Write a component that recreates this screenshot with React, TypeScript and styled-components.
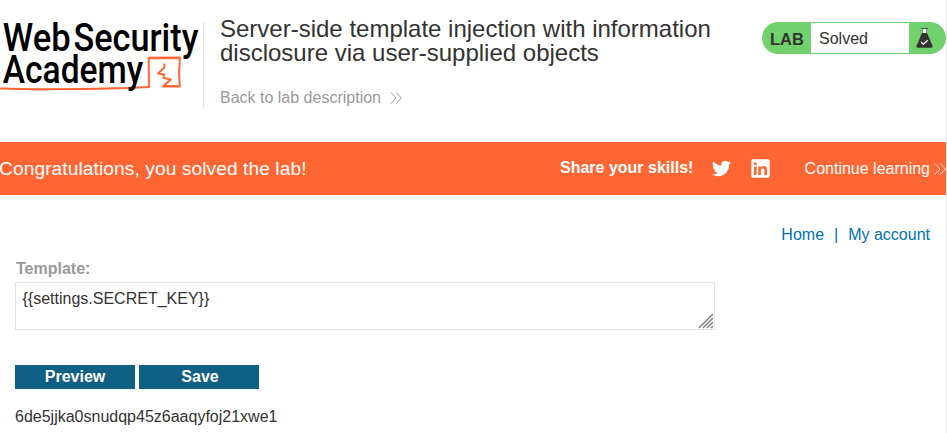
import React from "react";
import styled, { createGlobalStyle } from "styled-components";

const GlobalStyle = createGlobalStyle`
  * { box-sizing: border-box; }
  body {
    margin: 0;
    overflow: hidden;
    background: #fff;
    color: #333332;
    font-family: "Liberation Sans", Arial, sans-serif;
    font-size: 16px;
  }
  h2, h4, p { margin: 0; font-weight: 400; }
  a { text-decoration: none; }
`;

const Page = styled.div`
  height: 433px;
  border-right: 1px solid #e9e9e9;
`;

const Header = styled.header`
  display: flex;
  height: 142px;
  padding-top: 22px;
`;

const LogoLink = styled.a`
  width: 203px;
  height: 86px;
`;

const LogoSvg = styled.svg`
  display: block;
  overflow: visible;
  font-family: Roboto, "Liberation Sans", sans-serif;
  font-size: 38.5px;
  font-weight: 500;
`;

const TitleBlock = styled.div`
  flex: 1;
  height: 86px;
  padding-left: 16px;
  border-left: 1px solid #e3e3e3;
`;

const Title = styled.h2`
  width: 520px;
  margin-top: -5px;
  font-size: 24px;
  line-height: 24px;
  white-space: nowrap;
`;

const BackLink = styled.a`
  display: flex;
  align-items: center;
  gap: 9px;
  margin-top: 23px;
  line-height: 19px;
  color: #999;
`;

const LabStatus = styled.div`
  display: flex;
  width: 184px;
  height: 32px;
  padding: 1px 0;
  border-radius: 16px;
  background: #70d16d;
  line-height: 31px;
`;

const LabTag = styled.span`
  width: 49px;
  padding-left: 8px;
  padding-top: 1px;
  font-size: 16.5px;
  font-weight: 700;
`;

const LabState = styled.p`
  width: 98px;
  padding-left: 8px;
  background: #fff;
`;

const FlaskSlot = styled.span`
  padding: 5px 0 0 7px;
  line-height: 0;
`;

const Banner = styled.section`
  display: flex;
  align-items: center;
  height: 53px;
  background: #ff6633;
  color: #fff;
  white-space: nowrap;
  overflow: hidden;
`;

const Congratulations = styled.h4`
  width: 562px;
  margin-left: -1px;
  font-size: 19.2px;
  letter-spacing: 0.07px;
`;

const ShareLabel = styled.span`
  width: 152px;
  margin-top: -2px;
  font-weight: 700;
`;

const SocialLink = styled.a`
  width: 39.5px;
  line-height: 0;
`;

const ContinueLink = styled.a`
  display: flex;
  align-items: center;
  gap: 4px;
  margin-left: 14px;
  color: #fff;
`;

const Nav = styled.nav`
  display: flex;
  justify-content: flex-end;
  gap: 10px;
  height: 63px;
  padding: 30px 16px 0 0;
  line-height: 20px;
  color: #0071b2;
`;

const NavLink = styled.a`
  color: #0071b2;
`;

const Form = styled.form`
  padding-left: 15px;
`;

const Label = styled.label`
  display: block;
  height: 24px;
  padding-left: 1px;
  line-height: 21px;
  font-weight: 700;
  color: #999;
`;

const EditorFrame = styled.div`
  position: relative;
  width: 700px;
  height: 48px;
`;

const Editor = styled.textarea`
  display: block;
  width: 100%;
  height: 100%;
  margin: 0;
  padding: 7px 6.5px;
  border: 1px solid #e3e3e3;
  outline: none;
  resize: none;
  overflow: hidden;
  background: #fff;
  color: #333332;
  font: inherit;
`;

const ResizeGrip = styled.svg`
  position: absolute;
  right: 1px;
  bottom: 1px;
`;

const Actions = styled.div`
  display: flex;
  gap: 4px;
  margin-top: 35px;
`;

const Button = styled.button`
  width: 120px;
  height: 24px;
  padding: 0 0 1px;
  border: 0;
  background: #105f84;
  color: #fff;
  font: inherit;
  font-weight: 700;
  line-height: 22px;
`;

const SaveButton = styled(Button)`
  padding-left: 2px;
`;

const Output = styled.p`
  padding: 18px 0 0 15px;
  line-height: 20px;
`;

function Chevrons({ opacity = 1 }: { opacity?: number }) {
  return (
    <svg width="12" height="12" viewBox="0 0 12 12" fill="none" stroke="currentColor" strokeWidth="1" opacity={opacity}>
      <path d="M.8.4 6 6 .8 11.6M6.2.4 11.4 6 6.2 11.6" />
    </svg>
  );
}

function Logo() {
  return (
    <LogoSvg width="203" height="86" viewBox="0 0 203 86">
      <g fill="none" stroke="#ff6633" strokeLinejoin="round">
        <path strokeWidth="2" d="M0 66.6C38 67.8 79 67.2 128 66L149 65L148.7 35.7L180 35.4L179 51L179.8 64.4L163 64.4L170.6 57.5L163.5 55.8L164 52.6L158 51.5L164.4 45.5L164.2 41.6" />
        <path strokeWidth="1" d="M2 66.2L33 67.8L128 66.4M148 36.8L180 36.6M164 63.6L179 63.8" />
      </g>
      <g fill="#000">
        <text x="2.8" y="28.6" textLength="68" lengthAdjust="spacingAndGlyphs">Web</text>
        <text x="73.5" y="28.6" textLength="125" lengthAdjust="spacingAndGlyphs">Security</text>
        <text x="2.8" y="61.2" textLength="140.5" lengthAdjust="spacingAndGlyphs">Academy</text>
      </g>
    </LogoSvg>
  );
}

function Flask() {
  return (
    <svg width="17" height="21" viewBox="0 0 17 21">
      <path fill="#fff" d="M6 1h5v5H6z" />
      <path fill="#555" d="M5 0h7v1H5zM6 1h.7v4H6zM10.3 1h.7v4h-.7z" />
      <path fill="#333332" d="M6 5h5l5.5 12.7q.5 2-1.3 2H1.8q-1.8 0-1.3-2z" />
      <path fill="none" stroke="#fff" strokeWidth="1.2" d="m5.1 14 2.2 2.3 4.4-4.1" />
    </svg>
  );
}

function Twitter() {
  return (
    <svg width="19" height="19" viewBox="0 0 24 24" fill="#fff">
      <path d="M23.95 4.57a10 10 0 0 1-2.82.77 4.96 4.96 0 0 0 2.16-2.72 9.9 9.9 0 0 1-3.12 1.19 4.92 4.92 0 0 0-8.38 4.48C7.69 8.1 4.07 6.13 1.64 3.16a4.92 4.92 0 0 0 1.52 6.57 4.9 4.9 0 0 1-2.23-.61v.06a4.92 4.92 0 0 0 3.95 4.83 5 5 0 0 1-2.21.08 4.94 4.94 0 0 0 4.6 3.42A9.87 9.87 0 0 1 0 19.54a14 14 0 0 0 7.55 2.21c9.05 0 14-7.5 14-13.98 0-.21 0-.42-.02-.63a9.94 9.94 0 0 0 2.46-2.55z" />
    </svg>
  );
}

function LinkedIn() {
  return (
    <svg width="19" height="19" viewBox="0 0 19 19">
      <rect x=".3" y=".3" width="18.4" height="18.4" rx="1.7" fill="#fff" />
      <circle cx="4.3" cy="4.8" r="1.5" fill="#ff6633" />
      <path fill="#ff6633" d="M3 7.4h2.6V16H3zM7.3 7.4h2.5v1.2c.6-1 1.5-1.5 2.8-1.5 2.5 0 3.4 1.5 3.4 4V16h-2.6v-4.4c0-1.4-.4-2.2-1.6-2.2-1.3 0-1.9.9-1.9 2.3V16H7.3z" />
    </svg>
  );
}

export default function App() {
  return (
    <>
      <GlobalStyle />
      <Page>
        <Header>
          <LogoLink><Logo /></LogoLink>
          <TitleBlock>
            <Title>
              Server-side template injection with information<br />
              disclosure via user-supplied objects
            </Title>
            <BackLink>Back to lab description<Chevrons /></BackLink>
          </TitleBlock>
          <LabStatus>
            <LabTag>LAB</LabTag>
            <LabState>Solved</LabState>
            <FlaskSlot><Flask /></FlaskSlot>
          </LabStatus>
        </Header>
        <Banner>
          <Congratulations>Congratulations, you solved the lab!</Congratulations>
          <ShareLabel>Share your skills!</ShareLabel>
          <SocialLink><Twitter /></SocialLink>
          <SocialLink><LinkedIn /></SocialLink>
          <ContinueLink>Continue learning<Chevrons opacity={0.85} /></ContinueLink>
        </Banner>
        <Nav>
          <NavLink>Home</NavLink>
          <span>|</span>
          <NavLink>My account</NavLink>
        </Nav>
        <Form>
          <Label htmlFor="template">Template:</Label>
          <EditorFrame>
            <Editor id="template" defaultValue="{{settings.SECRET_KEY}}" spellCheck={false} />
            <ResizeGrip width="16" height="16" viewBox="0 0 16 16" stroke="#808080" strokeWidth="1.5">
              <path d="M1 15 15 1M5 15 15 5M9 15l6-6M13 15l2-2" />
            </ResizeGrip>
          </EditorFrame>
          <Actions>
            <Button type="button">Preview</Button>
            <SaveButton type="button">Save</SaveButton>
          </Actions>
        </Form>
        <Output>6de5jjka0snudqp45z6aaqyfoj21xwe1</Output>
      </Page>
    </>
  );
}
